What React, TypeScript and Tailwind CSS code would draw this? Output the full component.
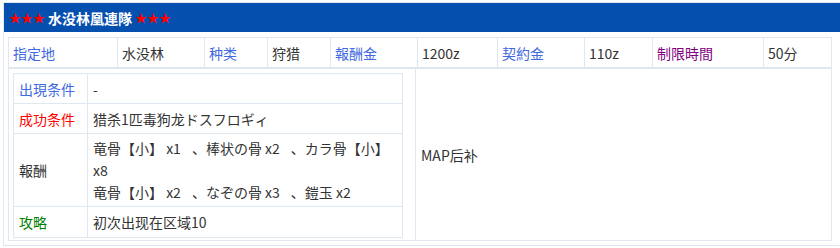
import React from "react";

const line = "border-[#dfe7f0]";

type Cell = { text: string; w: string; color: string };

const topCells: Cell[] = [
  { text: "指定地", w: "w-[109px]", color: "text-[#4169e1]" },
  { text: "水没林", w: "w-[87px]", color: "text-[#333333]" },
  { text: "种类", w: "w-[63px]", color: "text-[#4169e1]" },
  { text: "狩猎", w: "w-[63px]", color: "text-[#333333]" },
  { text: "報酬金", w: "w-[87px]", color: "text-[#4169e1]" },
  { text: "1200z", w: "w-[80px]", color: "text-[#333333]" },
  { text: "契約金", w: "w-[87px]", color: "text-[#4169e1]" },
  { text: "110z", w: "w-[68px]", color: "text-[#333333]" },
  { text: "制限時間", w: "w-[111px]", color: "text-[#800080]" },
  { text: "50分", w: "w-[68px]", color: "text-[#333333]" },
];

function InnerRow({
  label,
  color,
  children,
  tall,
  last,
}: {
  label: string;
  color: string;
  children: React.ReactNode;
  tall?: boolean;
  last?: boolean;
}) {
  return (
    <div className={`flex ${last ? "" : "border-b"} ${line} ${tall ? "h-[73px]" : "h-[30px]"}`}>
      <div className={`w-[74px] shrink-0 border-r ${line} flex items-center pl-[5px] ${color}`}>{label}</div>
      <div className={`flex-1 flex items-center pl-[5px] text-[#333333] ${tall ? "py-[3px]" : ""}`}>
        <div className="whitespace-nowrap">{children}</div>
      </div>
    </div>
  );
}

function Sep() {
  return <span className="ml-[11px]">、</span>;
}

export default function App() {
  return (
    <div className="w-[840px] h-[248px] bg-white pt-[2px] pl-[3px] overflow-hidden font-['Noto_Sans_CJK_SC','Noto_Sans_CJK_JP',sans-serif] text-[14px] leading-[22px]">
      <div className={`w-[837px] border-l border-t border-b ${line}`}>
        <div className="h-[29px] bg-[#0550af] flex items-center pl-[5px] text-white font-bold text-[14px]">
          <span className="text-[#ff0000] text-[12px] font-normal">★★★</span>
          <span className="ml-[3px]">水没林凰連隊</span>
          <span className="ml-[3px] text-[#ff0000] text-[12px] font-normal">★★★</span>
        </div>
        <div className="mt-[5px] ml-[4px] mb-[4px] w-[824px]">
          <div className={`flex h-[31px] border-t border-b border-l ${line}`}>
            {topCells.map((c, i) => (
              <div key={i} className={`${c.w} shrink-0 border-r ${line} flex items-center pl-[4px] ${c.color}`}>
                {c.text}
              </div>
            ))}
          </div>
          <div className={`flex h-[173px] border ${line}`}>
            <div className={`w-[407px] shrink-0 border-r ${line} pt-[4px] pl-[4px]`}>
              <div className={`w-[390px] border ${line}`}>
                <InnerRow label="出現条件" color="text-[#4169e1]">-</InnerRow>
                <InnerRow label="成功条件" color="text-[#ff0000]">猎杀1匹毒狗龙ドスフロギィ</InnerRow>
                <InnerRow label="報酬" color="text-[#333333]" tall>
                  竜骨【小】 x1<Sep />棒状の骨 x2<Sep />カラ骨【小】
                  <br />
                  x8
                  <br />
                  竜骨【小】 x2<Sep />なぞの骨 x3<Sep />鎧玉 x2
                </InnerRow>
                <InnerRow label="攻略" color="text-[#008000]" last>
                  初次出现在区域10
                </InnerRow>
              </div>
            </div>
            <div className="flex-1 flex items-center pl-[5px] text-[#333333]">MAP后补</div>
          </div>
        </div>
      </div>
    </div>
  );
}
